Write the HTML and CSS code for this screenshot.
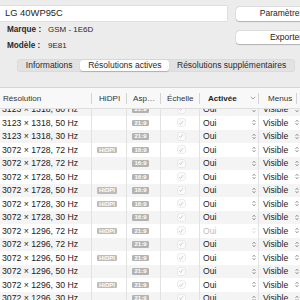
FILE: index.html
```html
<!DOCTYPE html>
<html lang="fr">
<head>
<meta charset="utf-8">
<link rel="stylesheet" href="styles.css">
</head>
<body>
<div class="top">
  <div class="ident">
    <div class="field">LG 40WP95C</div>
    <div class="info"><span class="lbl">Marque :</span><span>GSM - 1E6D</span></div>
    <div class="info"><span class="lbl">Modèle :</span><span>9E81</span></div>
  </div>
  <div class="actions">
    <div class="btn">Paramètres…</div>
    <div class="btn">Exporter</div>
  </div>
</div>
<div class="tabs">
  <div class="seg">
    <div class="seg-item">Informations</div>
    <div class="seg-item on">Résolutions actives</div>
    <div class="seg-item">Résolutions supplémentaires</div>
  </div>
</div>
<div class="table">
  <div class="thead">
    <div class="th c-res">Résolution</div>
    <div class="th c-hidpi">HiDPI</div>
    <div class="th c-asp">Asp…</div>
    <div class="th c-scale">Échelle</div>
    <div class="th c-act sorted">Activée<svg class="sort" width="6" height="4" viewBox="0 0 6 4"><path d="M0.8 0.8 L3 3 L5.2 0.8" fill="none" stroke="#8a8a8a" stroke-width="0.8"/></svg></div>
    <div class="th c-menu">Menus</div>
    <div class="th c-last"></div>
  </div>
  <div class="tbody" id="tbody"></div>
</div>
<script>
const rows = [
  ["3123 × 1318, 60 Hz", false, "21:9", true],
  ["3123 × 1318, 50 Hz", false, "21:9", true],
  ["3123 × 1318, 30 Hz", false, "21:9", true],
  ["3072 × 1728, 72 Hz", true, "16:9", true],
  ["3072 × 1728, 72 Hz", false, "16:9", true],
  ["3072 × 1728, 50 Hz", false, "16:9", true],
  ["3072 × 1728, 50 Hz", true, "16:9", true],
  ["3072 × 1728, 30 Hz", true, "16:9", true],
  ["3072 × 1728, 30 Hz", false, "16:9", true],
  ["3072 × 1296, 72 Hz", true, "21:9", false],
  ["3072 × 1296, 72 Hz", false, "21:9", true],
  ["3072 × 1296, 50 Hz", true, "21:9", true],
  ["3072 × 1296, 50 Hz", false, "21:9", true],
  ["3072 × 1296, 30 Hz", true, "21:9", true],
  ["3072 × 1296, 30 Hz", false, "21:9", true]
];
const chev = '<svg class="updown" width="4" height="7" viewBox="0 0 4 7"><path d="M0.7 2.7 L2 1.3 L3.3 2.7 M0.7 4.3 L2 5.7 L3.3 4.3" fill="none" stroke="currentColor" stroke-width="0.75"/></svg>';
const check = '<span class="cb"><svg width="6" height="6" viewBox="0 0 6 6"><path d="M1.2 3.2 L2.5 4.5 L4.9 1.3" fill="none" stroke="#bdbdbd" stroke-width="0.8"/></svg></span>';
document.getElementById('tbody').innerHTML = rows.map(r =>
  '<div class="tr">' +
    '<div class="td c-res">' + r[0] + '</div>' +
    '<div class="td c-hidpi">' + (r[1] ? '<span class="badge wide">HiDPI</span>' : '') + '</div>' +
    '<div class="td c-asp"><span class="badge">' + r[2] + '</span></div>' +
    '<div class="td c-scale">' + check + '</div>' +
    '<div class="td c-act' + (r[3] ? '' : ' off') + '"><span>Oui</span>' + chev + '</div>' +
    '<div class="td c-menu"><span>Visible</span>' + chev + '</div>' +
    '<div class="td c-last"></div>' +
  '</div>').join('');
</script>
</body>
</html>
```
FILE: styles.css
```css
html, body {
  margin: 0;
  padding: 0;
}
body {
  width: 300px;
  height: 300px;
  overflow: hidden;
  background: #ececec;
  font-family: "Liberation Sans", Arial, sans-serif;
  color: #222;
}
.top {
  display: flex;
  padding-top: 6px;
}
.ident {
  flex: 0 0 230px;
  margin-left: -3px;
}
.field {
  height: 14.5px;
  line-height: 14.5px;
  background: #fff;
  padding-left: 8px;
  font-size: 9.4px;
  color: #1e1e1e;
  box-shadow: 0 0 0 0.5px #d2d2d2;
}
.info {
  display: grid;
  grid-template-columns: 41px auto;
  height: 16px;
  line-height: 16px;
  padding-left: 10px;
  font-size: 8px;
  color: #2a2a2a;
}
.field + .info { margin-top: 1.5px; }
.lbl {
  font-weight: bold;
  font-size: 8.2px;
}
.actions {
  margin-left: 9px;
  padding-top: 1.3px;
  display: flex;
  flex-direction: column;
  gap: 10px;
}
.btn {
  width: 100px;
  height: 13.4px;
  line-height: 13.4px;
  text-align: center;
  background: #fff;
  border-radius: 3.5px;
  box-shadow: 0 0.5px 1px rgba(0,0,0,0.22), 0 0 0 0.5px rgba(0,0,0,0.08);
  font-size: 8.5px;
  color: #222;
}
.tabs {
  display: flex;
  margin-top: 4.5px;
  padding-left: 17px;
}
.seg {
  display: flex;
  height: 13px;
  background: #e2e2e2;
  border-radius: 4px;
  box-shadow: inset 0 0 0 0.5px #d4d4d4;
  padding: 0 1px;
  align-items: center;
}
.seg-item {
  padding: 0 7.8px;
  font-size: 8.5px;
  line-height: 11px;
  height: 11px;
  color: #2a2a2a;
}
.seg-item.on {
  background: #fff;
  border-radius: 3px;
  box-shadow: 0 0.5px 1px rgba(0,0,0,0.2);
}
.table {
  margin-top: 15.5px;
  height: 213px;
  overflow: hidden;
  border-top: 0.5px solid #d6d6d6;
}
.thead, .tr {
  display: grid;
  grid-template-columns: 92px 35px 34px 39px 59px 37.5px 20px;
}
.thead {
  position: relative;
  z-index: 1;
  height: 20px;
  align-items: center;
  background: #f8f8f8;
  border-bottom: 0.5px solid #dedede;
  font-size: 8.1px;
  color: #333;
}
.th {
  height: 11px;
  line-height: 11px;
  padding-left: 6px;
  border-right: 0.5px solid #d4d4d4;
  white-space: nowrap;
  overflow: hidden;
  display: flex;
  align-items: center;
}
.th.c-res { padding-left: 3px; }
.th.c-hidpi { padding-left: 7px; }
.th.c-act { padding-left: 8px; }
.th.c-menu { padding-left: 9px; }
.th.c-last { border-right: none; }
.th.sorted { font-weight: bold; color: #222; }
.sort { margin-left: 13px; }
.tbody {
  margin-top: -6.5px;
}
.tr {
  height: 13.5px;
  align-items: stretch;
  font-size: 8.6px;
  background: #fff;
}
.tr:nth-child(odd) { background: #f4f4f5; }
.td {
  display: flex;
  align-items: center;
  border-right: 0.5px solid #e2e2e2;
  white-space: nowrap;
  color: #222;
}
.td.c-res { padding-left: 2px; font-size: 8.7px; }
.td.c-hidpi { padding-left: 4.7px; }
.td.c-asp { padding-left: 5px; }
.td.c-scale { justify-content: center; padding-left: 2px; }
.td.c-act { padding-left: 3px; padding-right: 2px; justify-content: space-between; }
.td.c-act.off { color: #bcbcbc; }
.td.c-menu { padding-left: 4px; border-right: none; justify-content: space-between; margin-right: -2px; }
.td.c-last { border-right: none; }
.updown { color: #555; }
.off .updown { color: #c4c4c4; }
.badge {
  display: inline-block;
  width: 17px;
  height: 6.5px;
  line-height: 6.5px;
  border-radius: 1.2px;
  background: #b3b3b3;
  color: #fff;
  font-size: 6px;
  font-weight: bold;
  text-align: center;
}
.badge.wide {
  width: 20.6px;
  background: #bcbcbc;
}
.cb {
  display: inline-flex;
  align-items: center;
  justify-content: center;
  width: 7px;
  height: 7px;
  border-radius: 1.5px;
  background: #fbfbfb;
  box-shadow: 0 0 0 0.5px #dcdcdc;
}
```
